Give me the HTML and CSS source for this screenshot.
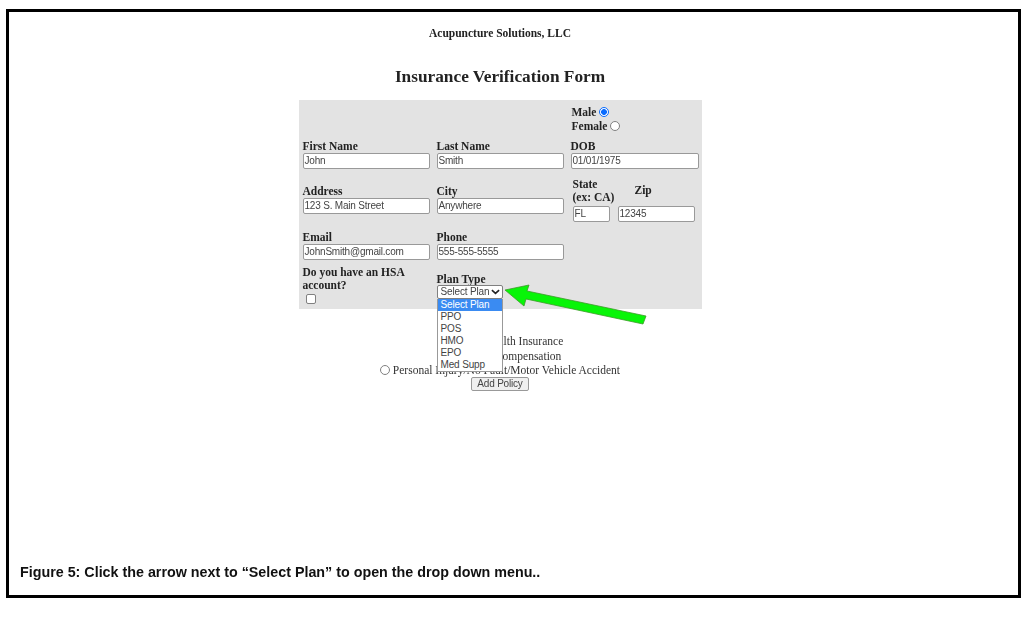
FILE: index.html
```html
<!DOCTYPE html>
<html lang="en">
<head>
<meta charset="utf-8">
<title>Insurance Verification Form</title>
<link rel="stylesheet" href="styles.css">
</head>
<body>
<div class="frame">
  <p class="company">Acupuncture Solutions, LLC</p>
  <h1 class="title">Insurance Verification Form</h1>
  <div class="panel">
    <div class="cell"></div>
    <div class="cell"></div>
    <div class="cell gender">
      <label class="line">Male <span class="radio on"></span></label>
      <label class="line">Female <span class="radio"></span></label>
    </div>
    <div class="cell"><span class="lbl">First Name</span><span class="inp">John</span></div>
    <div class="cell"><span class="lbl">Last Name</span><span class="inp">Smith</span></div>
    <div class="cell"><span class="lbl">DOB</span><span class="inp wide">01/01/1975</span></div>
    <div class="cell addr-row"><span class="lbl">Address</span><span class="inp">123 S. Main Street</span></div>
    <div class="cell addr-row"><span class="lbl">City</span><span class="inp">Anywhere</span></div>
    <div class="cell state-row">
      <div class="state">
        <span class="lbl">State<br>(ex: CA)</span>
        <span class="inp short">FL</span>
      </div>
      <div class="zip">
        <span class="lbl zip-lbl">Zip</span>
        <span class="inp zip-inp">12345</span>
      </div>
    </div>
    <div class="cell"><span class="lbl">Email</span><span class="inp">JohnSmith@gmail.com</span></div>
    <div class="cell"><span class="lbl">Phone</span><span class="inp">555-555-5555</span></div>
    <div class="cell"></div>
    <div class="cell hsa-row"><span class="lbl">Do you have an HSA account?</span><span class="check"></span></div>
    <div class="cell plan-row">
      <span class="lbl">Plan Type</span>
      <span class="select">Select Plan
        <svg class="chev" viewBox="0 0 10 6" width="9" height="6"><path d="M1 1l4 3.5L9 1" fill="none" stroke="#222" stroke-width="1.8"/></svg>
      </span>
      <ul class="menu">
        <li class="sel">Select Plan</li>
        <li>PPO</li>
        <li>POS</li>
        <li>HMO</li>
        <li>EPO</li>
        <li>Med Supp</li>
      </ul>
    </div>
    <div class="cell"></div>
  </div>
  <div class="options">
    <div class="opt"><span class="radio"></span> Private Health Insurance</div>
    <div class="opt"><span class="radio"></span> Workers' Compensation</div>
    <div class="opt"><span class="radio"></span> Personal Injury/No Fault/Motor Vehicle Accident</div>
    <span class="btn">Add Policy</span>
  </div>
  <p class="caption">Figure 5: Click the arrow next to “Select Plan” to open the drop down menu..</p>
  <svg class="arrow" viewBox="0 0 150 50" width="150" height="50">
    <path d="M5 10 L29 5 L27 11 L146 36 L143 44 L26 19 L24 26 Z" fill="#08f508" stroke="#3c9a28" stroke-width="0.8"/>
  </svg>
</div>
</body>
</html>
```
FILE: styles.css
```css
* { box-sizing: border-box; }
html, body { margin: 0; background: #fff; }
body { height: 619px; padding: 9px 3px 21px 6px; overflow: hidden; }
.frame {
  position: relative;
  height: 589px;
  padding-right: 27px;
  border: 3px solid #000;
  display: flex;
  flex-direction: column;
  align-items: center;
  font-family: "Liberation Serif", serif;
  color: #222;
  filter: blur(0.45px);
}
.company { margin: 15px 0 0; font-size: 11.5px; line-height: 13px; font-weight: bold; }
.title { margin: 27px 0 0; font-size: 17.3px; line-height: 20px; font-weight: bold; }
.panel {
  margin-top: 13px;
  width: 403px;
  height: 209px;
  padding: 5px 4px 0;
  background: #e3e3e3;
  display: grid;
  grid-template-columns: 134px 134px 1fr;
  grid-template-rows: 35px 38px 53px 35px 1fr;
  font-size: 11.5px;
}
.cell { display: flex; flex-direction: column; align-items: flex-start; position: relative; }
.lbl { font-weight: bold; line-height: 13px; display: block; white-space: nowrap; }
.gender { font-weight: bold; padding-left: 1px; }
.line { display: flex; align-items: center; gap: 3px; line-height: 14px; }
.radio {
  display: inline-block;
  width: 10px;
  height: 10px;
  border: 1px solid #808080;
  border-radius: 50%;
  background: #fff;
  vertical-align: -1px;
}
.radio.on { border: 1px solid #0a6cff; background: radial-gradient(circle, #0a6cff 0 2.6px, #fff 3.2px); }
.inp {
  display: block;
  width: 127px;
  height: 16px;
  border: 1px solid #999;
  border-radius: 2px;
  background: #fff;
  padding: 0 1px;
  font: 10px/14px "Liberation Sans", sans-serif;
  letter-spacing: -0.2px;
  color: #444;
}
.inp.wide { width: 128px; }
.inp.short { width: 37px; margin: 2px 0 0 2px; }
.addr-row { padding-top: 7px; }
.state-row { flex-direction: row; align-items: flex-start; }
.state { width: 47px; }
.state .lbl { padding-left: 2px; }
.zip { display: flex; flex-direction: column; }
.zip-lbl { padding: 6px 0 0 17px; }
.inp.zip-inp { width: 77px; margin-top: 9px; }
.hsa-row { width: 120px; }
.hsa-row .lbl { white-space: normal; }
.check {
  display: block;
  width: 10px;
  height: 10px;
  margin: 2px 0 0 3px;
  border: 1px solid #808080;
  border-radius: 2px;
  background: #fff;
}
.plan-row { padding-top: 7px; }
.select {
  display: flex;
  align-items: center;
  justify-content: space-between;
  width: 66px;
  height: 14px;
  margin-top: -1px;
  padding: 0 2px 0 3px;
  border: 1px solid #808080;
  border-radius: 2px;
  background: #fff;
  font: 10px/12px "Liberation Sans", sans-serif;
  letter-spacing: -0.15px;
  color: #444;
  white-space: nowrap;
}
.menu {
  position: absolute;
  left: 0;
  top: 33px;
  z-index: 2;
  width: 66px;
  height: 73px;
  margin: 0;
  padding: 0;
  list-style: none;
  background: #fff;
  border: 1px solid #999;
  border-top: 0;
  font: 10px/12px "Liberation Sans", sans-serif;
  letter-spacing: -0.15px;
  color: #444;
}
.menu li { padding-left: 3px; height: 12px; }
.menu .sel { background: #3a8bf2; color: #fff; height: 12px; }
.options {
  margin-top: 25px;
  display: flex;
  flex-direction: column;
  align-items: center;
  font-size: 11.5px;
  line-height: 14.5px;
  color: #333;
}
.opt { white-space: nowrap; }
.btn {
  display: block;
  height: 14px;
  margin-top: -1px;
  padding: 0 5px;
  border: 1px solid #999;
  border-radius: 2px;
  background: #efefef;
  font: 10px/12px "Liberation Sans", sans-serif;
  letter-spacing: -0.2px;
  color: #444;
}
.caption {
  margin: auto 0 15px 11px;
  align-self: flex-start;
  font: bold 14.3px/16px "Liberation Sans", sans-serif;
  color: #111;
}
.arrow { position: absolute; left: 491px; top: 268px; z-index: 3; }
```
